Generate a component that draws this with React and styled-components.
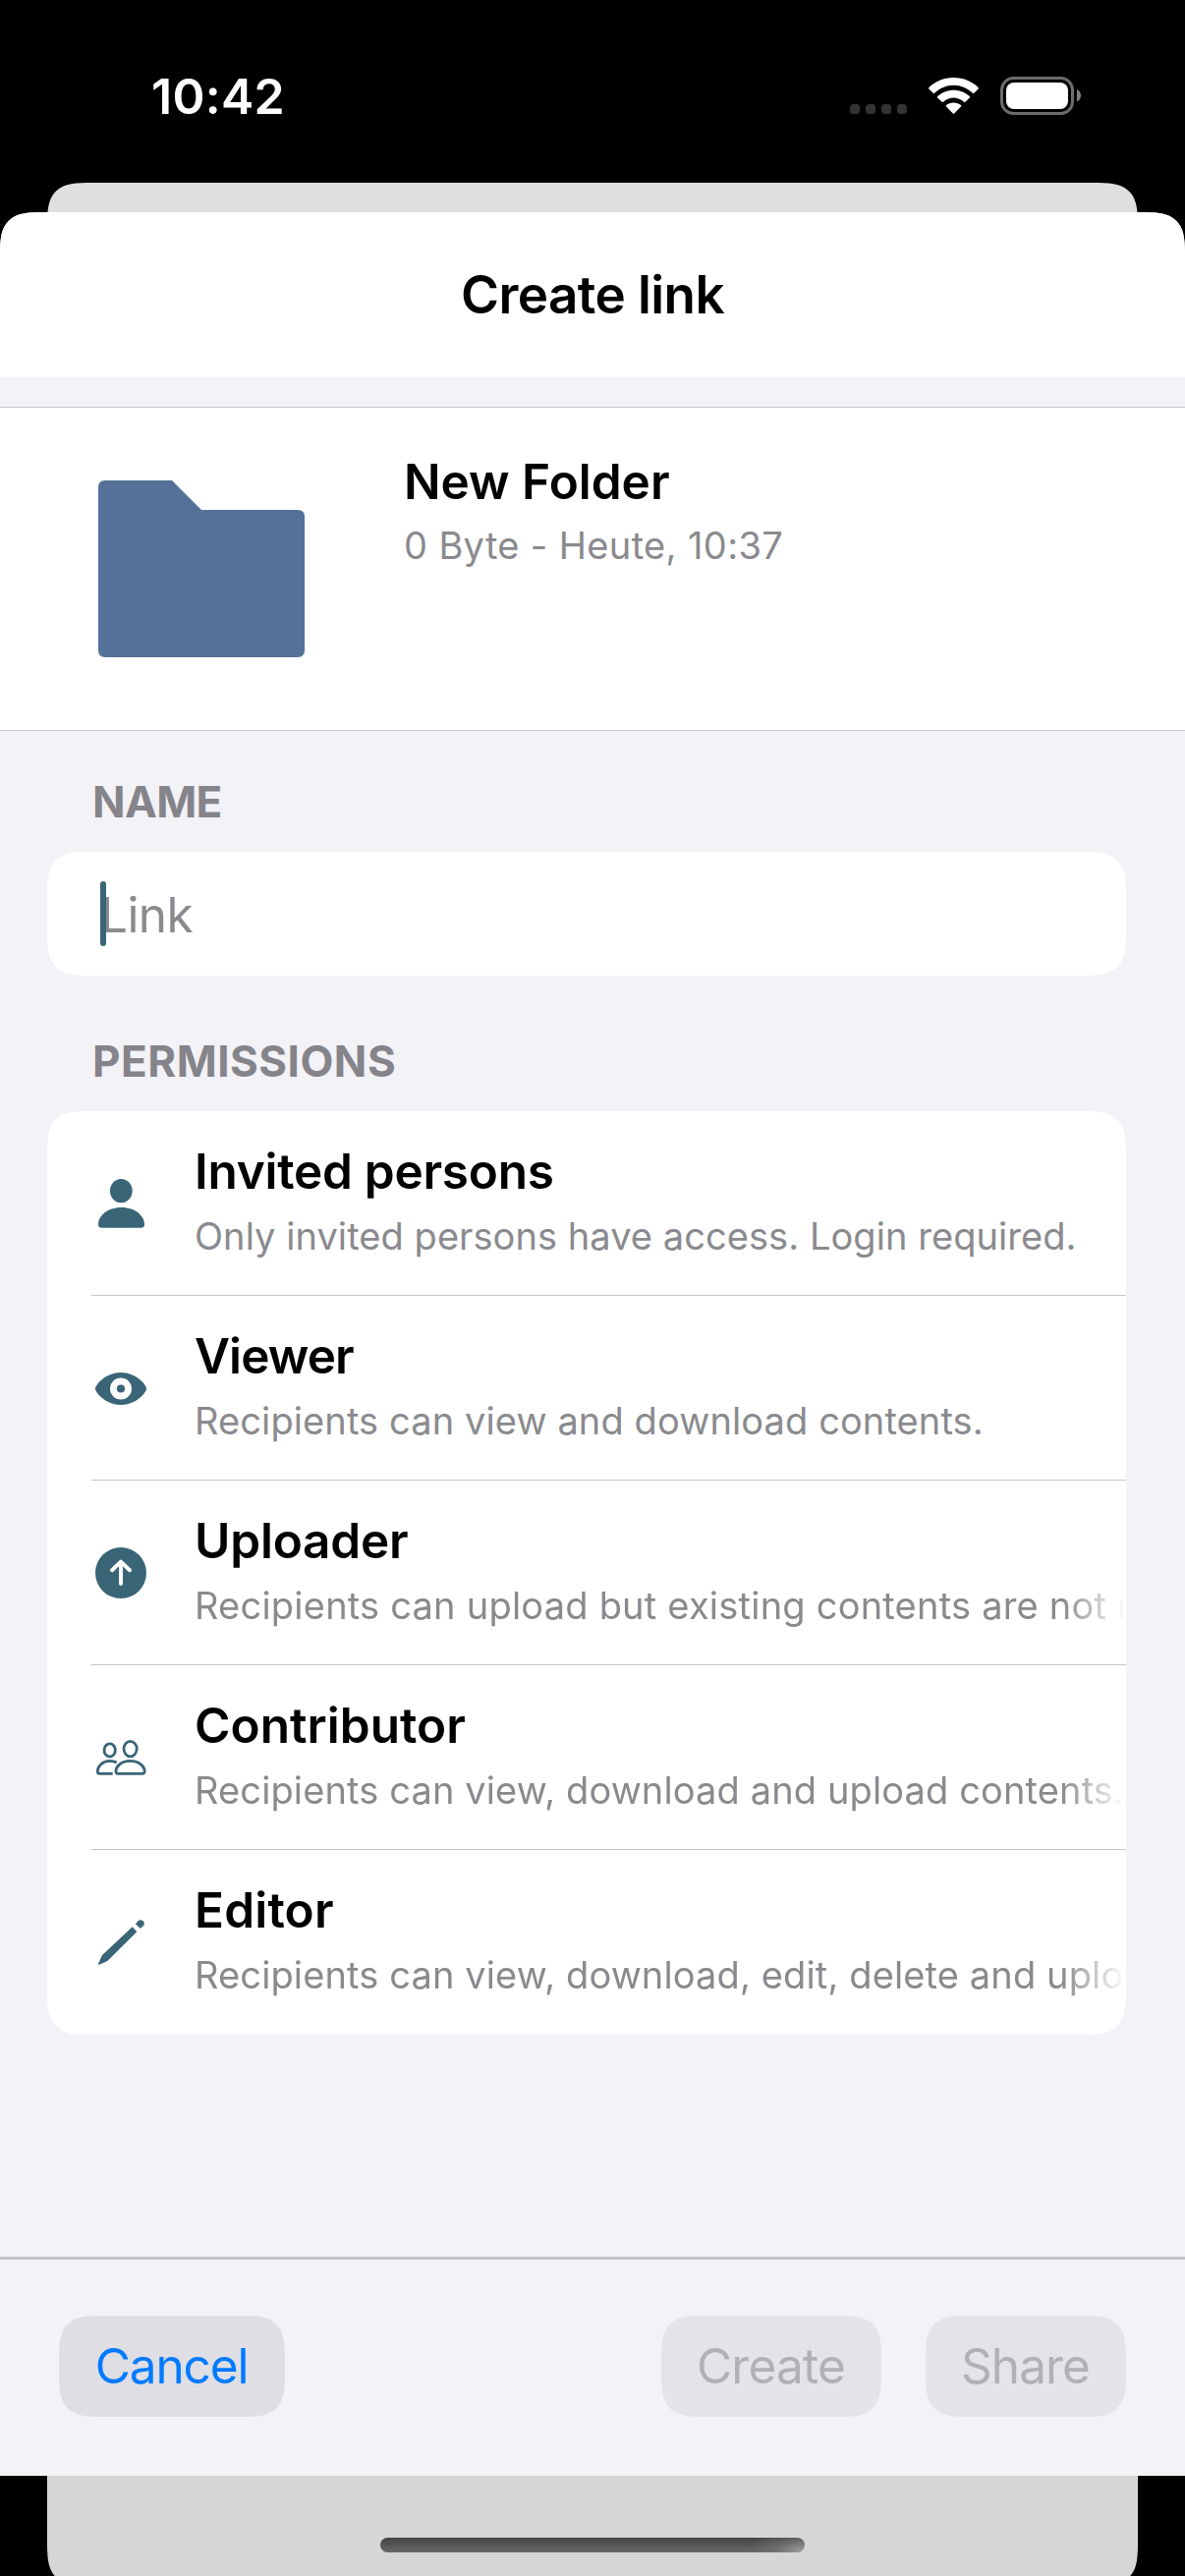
import React from 'react';
import styled, { createGlobalStyle, css } from 'styled-components';

const TEAL = '#396577';
const GROUPED = '#f2f2f7';
const SEPARATOR = '#c6c6c8';

const GlobalStyle = createGlobalStyle`
  * { box-sizing: border-box; }
  body {
    margin: 0;
    background: #000;
    font-family: Inter, "Liberation Sans", sans-serif;
  }
`;

const Screen = styled.main`
  display: flex;
  flex-direction: column;
  width: 1206px;
  height: 2622px;
  overflow: hidden;
  background: #000;
`;

const smoothCorner = css`
  corner-shape: superellipse(1.7);
`;

/* Status bar */
const StatusBar = styled.header`
  display: flex;
  flex: none;
  justify-content: space-between;
  align-items: flex-start;
  height: 186px;
  padding: 68px 105px 0 154px;
`;

const Clock = styled.time`
  color: #fff;
  font-size: 50px;
  font-weight: 600;
  line-height: 60px;
  letter-spacing: 0.3px;
`;

const StatusIcons = styled.div`
  display: flex;
  align-items: flex-end;
  gap: 22px;
  height: 49px;
  svg { display: block; }
`;

const SignalDots = styled.div`
  display: flex;
  gap: 6px;
  margin-bottom: 1px;
`;

const SignalDot = styled.i`
  width: 10px;
  height: 10px;
  border-radius: 3.5px;
  background: #333;
`;

const WifiIcon = styled.svg`
  margin-bottom: 1px;
`;

/* Card of the presenting screen, visible above and below the sheet */
const BackdropTop = styled.div`
  flex: none;
  height: 60px;
  margin: 0 48px -30px;
  border-radius: 46px 46px 0 0;
  ${smoothCorner}
  background: #dfdfdf;
`;

const BackdropBottom = styled.div`
  display: flex;
  flex: none;
  justify-content: center;
  align-items: flex-start;
  height: 112px;
  margin: 0 48px;
  padding-top: 63px;
  border-radius: 0 0 46px 46px;
  ${smoothCorner}
  background: #d6d6d6;
`;

const HomeIndicator = styled.div`
  width: 432px;
  height: 15px;
  border-radius: 8px;
  background:
    radial-gradient(ellipse 58px 26px at 100% 100%, #a0a0a0 0%, rgba(120, 120, 120, 0.6) 50%, rgba(100, 100, 100, 0) 100%),
    linear-gradient(#434343, #686868);
`;

/* Sheet */
const Sheet = styled.section`
  position: relative;
  display: flex;
  flex: none;
  flex-direction: column;
  height: 2304px;
  overflow: hidden;
  border-radius: 46px 46px 0 0;
  ${smoothCorner}
  background: ${GROUPED};
`;

const SheetHeader = styled.div`
  display: flex;
  flex: none;
  justify-content: center;
  height: 168px;
  padding-top: 52px;
  background: #fff;
`;

const SheetTitle = styled.h1`
  margin: 0;
  font-size: 53px;
  font-weight: 600;
  line-height: 64px;
  letter-spacing: -0.57px;
`;

const ItemCard = styled.div`
  display: flex;
  flex: none;
  align-items: flex-start;
  height: 330px;
  margin-top: 30px;
  border: solid ${SEPARATOR};
  border-width: 1px 0;
  background: #fff;
`;

const FolderIcon = styled.svg`
  display: block;
  flex: none;
  margin: 74px 101px 0 100px;
  fill: #557199;
`;

const ItemText = styled.div`
  display: flex;
  flex-direction: column;
  gap: 12px;
  padding-top: 45px;
`;

const Title = styled.div`
  font-size: 49.5px;
  font-weight: 600;
  line-height: 60px;
  letter-spacing: ${(p) => p.$tracking || 0}px;
  white-space: nowrap;
`;

const Subtitle = styled.div`
  overflow: hidden;
  color: #8a8a8e;
  font-size: 38px;
  line-height: 46px;
  letter-spacing: ${(p) => p.$tracking || 0}px;
  white-space: nowrap;
  ${(p) =>
    p.$fade &&
    css`
      mask-image: linear-gradient(to right, #000 calc(100% - 66px), transparent);
    `}
`;

const Form = styled.div`
  display: flex;
  flex: 1;
  flex-direction: column;
  padding: 0 60px 0 48px;
`;

const SectionLabel = styled.h2`
  margin: ${(p) => p.$space}px 0 24px 46px;
  color: #85848a;
  font-size: 44px;
  font-weight: 650;
  line-height: 54px;
  letter-spacing: ${(p) => p.$tracking}px;
`;

const cardSurface = css`
  overflow: hidden;
  border-radius: 46px;
  ${smoothCorner}
  background: #fff;
`;

const NameField = styled.div`
  position: relative;
  flex: none;
  height: 126px;
  padding: 34px 54px 0;
  ${cardSurface}
`;

const Placeholder = styled.span`
  display: block;
  color: #8a8a8e;
  font-size: 49.5px;
  line-height: 60px;
  letter-spacing: -0.6px;
`;

const Caret = styled.i`
  position: absolute;
  top: 30px;
  left: 54px;
  width: 6px;
  height: 66px;
  border-radius: 3px;
  background: ${TEAL};
`;

const RoleList = styled.ul`
  flex: none;
  margin: 0;
  padding: 0 0 0 45px;
  list-style: none;
  ${cardSurface}
`;

const RoleRow = styled.li`
  display: grid;
  grid-template-columns: 60px 1fr;
  column-gap: 45px;
  align-items: start;
  height: 188px;
  border-bottom: 1px solid ${SEPARATOR};
  &:last-child { border-bottom: 0; }
`;

const RoleIcon = styled.svg`
  display: block;
  margin-top: 64px;
  color: ${TEAL};
`;

const RoleText = styled.div`
  display: flex;
  flex-direction: column;
  gap: 13px;
  min-width: 0;
  padding-top: 31px;
`;

const Footer = styled.footer`
  display: flex;
  flex: none;
  align-items: flex-start;
  gap: 45px;
  height: 223px;
  padding: 57px 60px 0;
  border-top: 3px solid ${SEPARATOR};
`;

const FooterButton = styled.button`
  width: ${(p) => p.$width}px;
  height: 103px;
  margin: 0;
  padding: 0 1px 1px 0;
  border: 0;
  border-radius: 46px;
  ${smoothCorner}
  background: #dedee4;
  color: #007aff;
  font: 400 49.5px/60px Inter, "Liberation Sans", sans-serif;
  letter-spacing: ${(p) => p.$tracking}px;
  &:disabled {
    background: #e3e3e8;
    color: #b0b1b6;
  }
`;

const Spacer = styled.div`
  flex: 1;
  margin-right: -45px;
`;

const icons = {
  person: (
    <g fill="currentColor">
      <ellipse cx="30.3" cy="17.1" rx="11.4" ry="12.2" />
      <path d="M10.5 54.8Q7 54.8 7 51.2C7 43 16 34 30.5 34C45 34 54 43 54 51.2Q54 54.8 50.5 54.8Z" />
    </g>
  ),
  eye: (
    <>
      <path fill="currentColor" d="M30 14C45 14 56 26.3 56 30.5C56 34.7 45 47 30 47C15 47 4 34.7 4 30.5C4 26.3 15 14 30 14Z" />
      <circle cx="30" cy="30.5" r="11" fill="#fff" />
      <circle cx="30" cy="30.5" r="4.1" fill="currentColor" />
    </>
  ),
  upload: (
    <>
      <circle cx="30" cy="30" r="26" fill="currentColor" />
      <path d="M30 18.8V41M21 27.2L30 18.6L39 27.2" fill="none" stroke="#fff" strokeWidth="4" strokeLinecap="round" strokeLinejoin="round" />
    </>
  ),
  people: (
    <g fill="none" stroke="currentColor" strokeWidth="2.8">
      <ellipse cx="18.7" cy="22.4" rx="5.6" ry="6.6" />
      <ellipse cx="39.6" cy="21.1" rx="6.6" ry="7.8" />
      <path d="M21.7 46.4H8.4Q6.3 46.4 6.3 44.3C6.3 38.5 11.5 33.4 18.7 33.4Q22.6 33.4 25.8 35.1" />
      <path d="M27.4 46.4H51.8Q54.2 46.4 54.2 44.1C54.2 39 48.6 33.4 39.5 33.4C30.4 33.4 24.9 39 24.9 44.1Q24.9 46.4 27.4 46.4Z" />
    </g>
  ),
  pencil: (
    <g fill="currentColor">
      <path d="M41.7 14.3L46.3 19.3L17.4 48.1Q16.6 48.9 15.4 49.5L7.9 52.7Q6.5 53.1 7 51.8L10.2 44.7Q10.7 43.5 11.6 42.6Z" />
      <path d="M44.9 11.3L47.6 8.3Q49.9 6 52.5 8.3Q55 10.8 52.8 13.2L49.8 16Z" />
    </g>
  ),
};

const roles = [
  { icon: 'person', name: 'Invited persons', tracking: -0.25, text: 'Only invited persons have access. Login required.', textTracking: 0.06 },
  { icon: 'eye', name: 'Viewer', tracking: -0.9, text: 'Recipients can view and download contents.', textTracking: 0.11 },
  { icon: 'upload', name: 'Uploader', tracking: -0.2, text: 'Recipients can upload but existing contents are not revealed.', textTracking: 0.22, fade: true },
  { icon: 'people', name: 'Contributor', tracking: 0.05, text: 'Recipients can view, download and upload contents.', textTracking: 0.127, fade: true },
  { icon: 'pencil', name: 'Editor', tracking: 0.2, text: 'Recipients can view, download, edit, delete and upload contents.', textTracking: 0.127, fade: true },
];

function Status() {
  return (
    <StatusBar>
      <Clock>10:42</Clock>
      <StatusIcons>
        <SignalDots>
          <SignalDot />
          <SignalDot />
          <SignalDot />
          <SignalDot />
        </SignalDots>
        <WifiIcon width="51" height="37" viewBox="0 0 51 37" fill="#fff">
          <path d="M25.5 0C35.5 0 44.5 4 50.6 10Q51.3 10.8 50.6 11.5L46.3 15.7Q45.6 16.4 44.9 15.7C39.7 10.8 32.9 7.7 25.5 7.7C18.1 7.7 11.3 10.8 6.1 15.7Q5.4 16.4 4.7 15.7L.4 11.5Q-.3 10.8 .4 10C6.5 4 15.5 0 25.5 0Z" />
          <path d="M25.5 12.7C31.8 12.7 37.5 15 41.8 19Q42.5 19.8 41.8 20.5L37.4 24.7Q36.7 25.3 36 24.7C33.2 22 29.5 20.4 25.5 20.4C21.5 20.4 17.8 22 15 24.7Q14.3 25.3 13.6 24.7L9.2 20.5Q8.5 19.8 9.2 19C13.5 15 19.2 12.7 25.5 12.7Z" />
          <path d="M25.5 25.5C28.4 25.5 31 26.5 33 28.1Q33.8 28.9 33 29.6L26.2 36.4Q25.5 37 24.8 36.4L18 29.6Q17.2 28.9 18 28.1C20 26.5 22.6 25.5 25.5 25.5Z" />
        </WifiIcon>
        <svg width="83" height="39" viewBox="0 0 83 39">
          <rect x="1.5" y="1.5" width="72" height="36" rx="12" fill="none" stroke="#6b6b6b" strokeWidth="3" />
          <rect x="6" y="6" width="63" height="27" rx="8" fill="#fff" />
          <path d="M78 13C80.5 14 82 16.5 82 19.3C82 22.1 80.5 24.6 78 25.6Z" fill="#808080" />
        </svg>
      </StatusIcons>
    </StatusBar>
  );
}

export default function App() {
  return (
    <Screen>
      <GlobalStyle />
      <Status />
      <BackdropTop />
      <Sheet>
        <SheetHeader>
          <SheetTitle>Create link</SheetTitle>
        </SheetHeader>
        <ItemCard>
          <FolderIcon width="210" height="180" viewBox="0 0 210 180">
            <path d="M7 0H75L105 30H203Q210 30 210 37V173Q210 180 203 180H7Q0 180 0 173V7Q0 0 7 0Z" />
          </FolderIcon>
          <ItemText>
            <Title>New Folder</Title>
            <Subtitle $tracking={0.36}>0 Byte - Heute, 10:37</Subtitle>
          </ItemText>
        </ItemCard>
        <Form>
          <SectionLabel $space={45} $tracking={-0.6}>NAME</SectionLabel>
          <NameField>
            <Placeholder>Link</Placeholder>
            <Caret />
          </NameField>
          <SectionLabel $space={60} $tracking={0.5}>PERMISSIONS</SectionLabel>
          <RoleList>
            {roles.map((role) => (
              <RoleRow key={role.name}>
                <RoleIcon width="60" height="60" viewBox="0 0 60 60">
                  {icons[role.icon]}
                </RoleIcon>
                <RoleText>
                  <Title $tracking={role.tracking}>{role.name}</Title>
                  <Subtitle $tracking={role.textTracking} $fade={role.fade}>{role.text}</Subtitle>
                </RoleText>
              </RoleRow>
            ))}
          </RoleList>
        </Form>
        <Footer>
          <FooterButton $width={230} $tracking={-1.1}>Cancel</FooterButton>
          <Spacer />
          <FooterButton $width={224} $tracking={-0.76} disabled>Create</FooterButton>
          <FooterButton $width={204} $tracking={-0.9} disabled>Share</FooterButton>
        </Footer>
      </Sheet>
      <BackdropBottom>
        <HomeIndicator />
      </BackdropBottom>
    </Screen>
  );
}
